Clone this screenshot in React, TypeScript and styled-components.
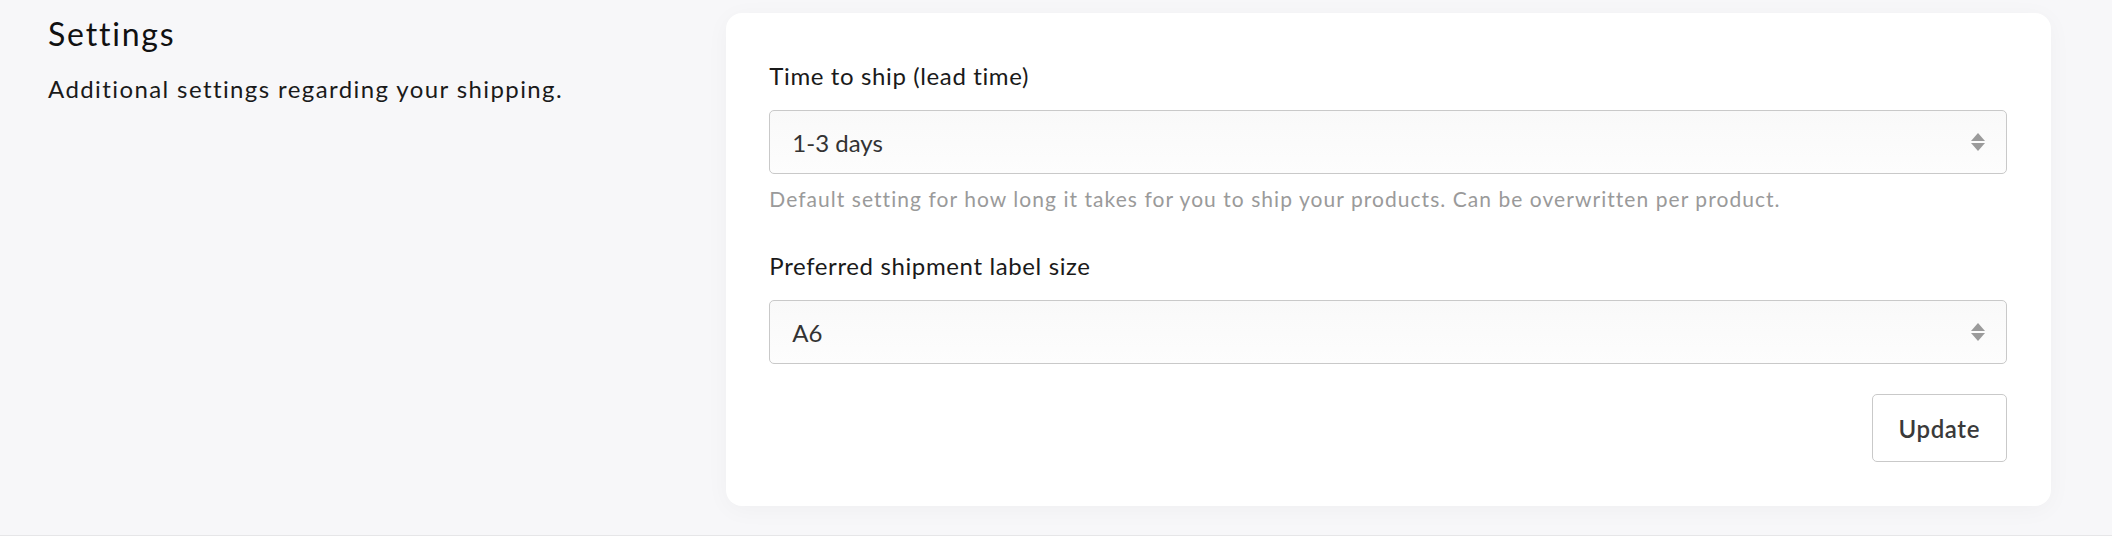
import React from "react";
import styled, { createGlobalStyle } from "styled-components";

const Global = createGlobalStyle`
  html, body {
    margin: 0;
    padding: 0;
    background: #f7f7f9;
  }
  body {
    font-family: Lato, "Liberation Sans", sans-serif;
    -webkit-font-smoothing: antialiased;
  }
  * { box-sizing: border-box; }
`;

const Section = styled.section`
  display: grid;
  grid-template-columns: repeat(3, minmax(0, 1fr));
  column-gap: 32px;
  padding: 13px 61px 29px 48px;
  border-bottom: 1px solid #e6e6e8;
  min-height: 536px;
  align-items: start;
`;

const Intro = styled.div`
  grid-column: span 1;
  padding-top: 2px;
`;

const Heading = styled.h2`
  margin: 0 0 18px;
  font-size: 32px;
  line-height: 38px;
  font-weight: 400;
  letter-spacing: 1.8px;
  color: #111;
`;

const Description = styled.p`
  margin: 0;
  font-size: 24px;
  line-height: 36px;
  letter-spacing: 1.4px;
  color: #1a1a1a;
`;

const Card = styled.div`
  grid-column: span 2;
  background: #fff;
  border-radius: 16px;
  padding: 45px 44px 44px 43px;
  box-shadow: 0 4px 24px rgba(20, 20, 40, 0.035);
`;

const Field = styled.div<{ $last?: boolean }>`
  display: flex;
  flex-direction: column;
  margin-bottom: ${(p) => (p.$last ? "30px" : "34px")};
`;

const Label = styled.label`
  font-size: 24px;
  line-height: 36px;
  letter-spacing: 0.62px;
  color: #1a1a1a;
  margin-bottom: 16px;
`;

const SelectWrap = styled.div`
  position: relative;
  height: 64px;
`;

const Select = styled.select`
  appearance: none;
  -webkit-appearance: none;
  width: 100%;
  height: 64px;
  margin: 0;
  padding: 0 60px 0 22px;
  border: 1px solid #c9c9c9;
  border-radius: 5px;
  background: linear-gradient(180deg, #f9f9f9 0%, #fdfdfd 100%);
  font-family: inherit;
  font-size: 24px;
  color: #333;
  outline: none;
`;

const Arrow = styled.svg`
  position: absolute;
  right: 22px;
  top: 50%;
  transform: translateY(-50%);
  width: 14px;
  height: 18px;
  pointer-events: none;
`;

const Hint = styled.p`
  margin: 9px 0 0;
  font-size: 21px;
  line-height: 31px;
  letter-spacing: 1.05px;
  color: #9a9a9a;
`;

const Actions = styled.div`
  display: flex;
  justify-content: flex-end;
`;

const Button = styled.button`
  height: 68px;
  padding: 0 26px;
  border: 1px solid #c9c9c9;
  border-radius: 5px;
  background: #fff;
  font-family: inherit;
  font-size: 24px;
  font-weight: 600;
  letter-spacing: 0.6px;
  color: #3a3a3a;
  cursor: pointer;
`;

const SortArrows = () => (
  <Arrow viewBox="0 0 14 18" aria-hidden>
    <path d="M7 0 L14 8 L0 8 Z" fill="#9b9b9b" />
    <path d="M0 10 L14 10 L7 18 Z" fill="#9b9b9b" />
  </Arrow>
);

export default function App() {
  return (
    <>
      <Global />
      <Section>
        <Intro>
          <Heading>Settings</Heading>
          <Description>Additional settings regarding your shipping.</Description>
        </Intro>
        <Card>
          <Field>
            <Label htmlFor="lead">Time to ship (lead time)</Label>
            <SelectWrap>
              <Select id="lead" defaultValue="1-3">
                <option value="1-3">1-3 days</option>
                <option value="3-5">3-5 days</option>
                <option value="5-7">5-7 days</option>
              </Select>
              <SortArrows />
            </SelectWrap>
            <Hint>
              Default setting for how long it takes for you to ship your products. Can be overwritten per product.
            </Hint>
          </Field>
          <Field $last>
            <Label htmlFor="label">Preferred shipment label size</Label>
            <SelectWrap>
              <Select id="label" defaultValue="A6">
                <option value="A6">A6</option>
                <option value="A4">A4</option>
              </Select>
              <SortArrows />
            </SelectWrap>
          </Field>
          <Actions>
            <Button type="button">Update</Button>
          </Actions>
        </Card>
      </Section>
    </>
  );
}
